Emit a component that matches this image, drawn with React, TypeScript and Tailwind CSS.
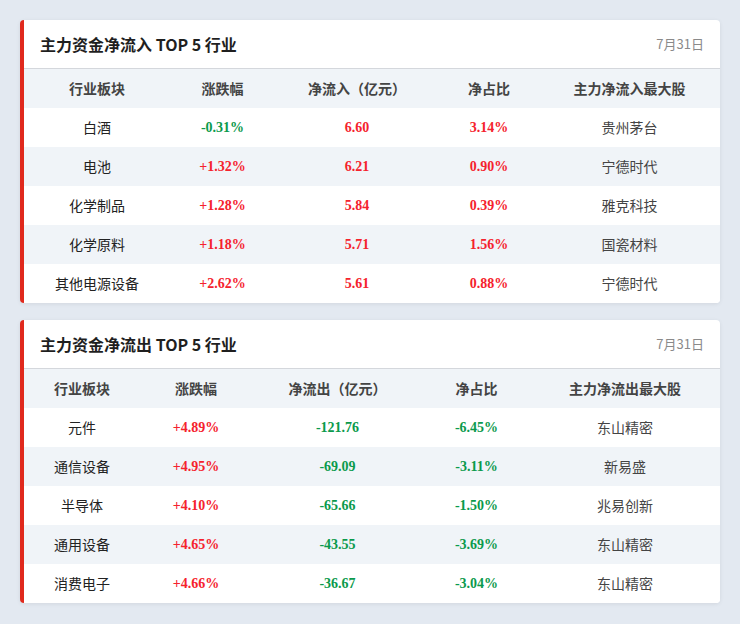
const sans = "font-['Noto_Sans_CJK_SC','Noto_Sans',sans-serif]";
const serif = "font-['Liberation_Serif','Noto_Sans_CJK_SC',serif]";

interface Row {
  name: string;
  change: string;
  flow: string;
  ratio: string;
  stock: string;
}

const inflow: Row[] = [
  { name: '白酒', change: '-0.31%', flow: '6.60', ratio: '3.14%', stock: '贵州茅台' },
  { name: '电池', change: '+1.32%', flow: '6.21', ratio: '0.90%', stock: '宁德时代' },
  { name: '化学制品', change: '+1.28%', flow: '5.84', ratio: '0.39%', stock: '雅克科技' },
  { name: '化学原料', change: '+1.18%', flow: '5.71', ratio: '1.56%', stock: '国瓷材料' },
  { name: '其他电源设备', change: '+2.62%', flow: '5.61', ratio: '0.88%', stock: '宁德时代' },
];

const outflow: Row[] = [
  { name: '元件', change: '+4.89%', flow: '-121.76', ratio: '-6.45%', stock: '东山精密' },
  { name: '通信设备', change: '+4.95%', flow: '-69.09', ratio: '-3.11%', stock: '新易盛' },
  { name: '半导体', change: '+4.10%', flow: '-65.66', ratio: '-1.50%', stock: '兆易创新' },
  { name: '通用设备', change: '+4.65%', flow: '-43.55', ratio: '-3.69%', stock: '东山精密' },
  { name: '消费电子', change: '+4.66%', flow: '-36.67', ratio: '-3.04%', stock: '东山精密' },
];

// red for up, green for down
function tone(v: string) {
  return v.startsWith('-') ? 'text-[#0b9a4c]' : 'text-[#f5222d]';
}

function Card({ title, flowLabel, stockLabel, rows, cols }: {
  title: string;
  flowLabel: string;
  stockLabel: string;
  rows: Row[];
  cols: string;
}) {
  return (
    <div className="bg-white rounded-[4px] border-l-4 border-l-[#e0291d] shadow-[0_1px_4px_rgba(0,0,0,0.08)] overflow-hidden">
      <div className="h-[49px] flex items-center justify-between px-4 border-b border-[#d4d7dc]">
        <h2 className={`${sans} text-[16px] font-bold text-[#1f1f1f]`}>{title}</h2>
        <span className={`${sans} text-[13px] text-[#8a8a8a]`}>7月31日</span>
      </div>
      <div className={`grid ${cols} h-[39px] items-center bg-[#f0f4f8] ${sans} text-[14px] font-bold text-[#444]`}>
        <div className="text-center">行业板块</div>
        <div className="text-center">涨跌幅</div>
        <div className="text-center">{flowLabel}</div>
        <div className="text-center">净占比</div>
        <div className="text-center">{stockLabel}</div>
      </div>
      {rows.map((r, i) => (
        <div
          key={r.name}
          className={`grid ${cols} h-[39px] items-center ${i % 2 === 1 ? 'bg-[#f0f4f8]' : 'bg-white'}`}
        >
          <div className={`${sans} text-center text-[14px] text-[#222]`}>{r.name}</div>
          <div className={`${serif} text-center text-[14px] font-bold ${tone(r.change)}`}>{r.change}</div>
          <div className={`${serif} text-center text-[14px] font-bold ${tone(r.flow)}`}>{r.flow}</div>
          <div className={`${serif} text-center text-[14px] font-bold ${tone(r.ratio)}`}>{r.ratio}</div>
          <div className={`${sans} text-center text-[14px] text-[#444]`}>{r.stock}</div>
        </div>
      ))}
    </div>
  );
}

export default function App() {
  return (
    <div className="min-h-[624px] w-[740px] bg-[#e3e9f1] p-5 flex flex-col gap-[17px]">
      <Card
        title="主力资金净流入 TOP 5 行业"
        flowLabel="净流入（亿元）"
        stockLabel="主力净流入最大股"
        rows={inflow}
        cols="grid-cols-[146px_105px_164px_100px_1fr]"
      />
      <Card
        title="主力资金净流出 TOP 5 行业"
        flowLabel="净流出（亿元）"
        stockLabel="主力净流出最大股"
        rows={outflow}
        cols="grid-cols-[116px_112px_171px_107px_1fr]"
      />
    </div>
  );
}
